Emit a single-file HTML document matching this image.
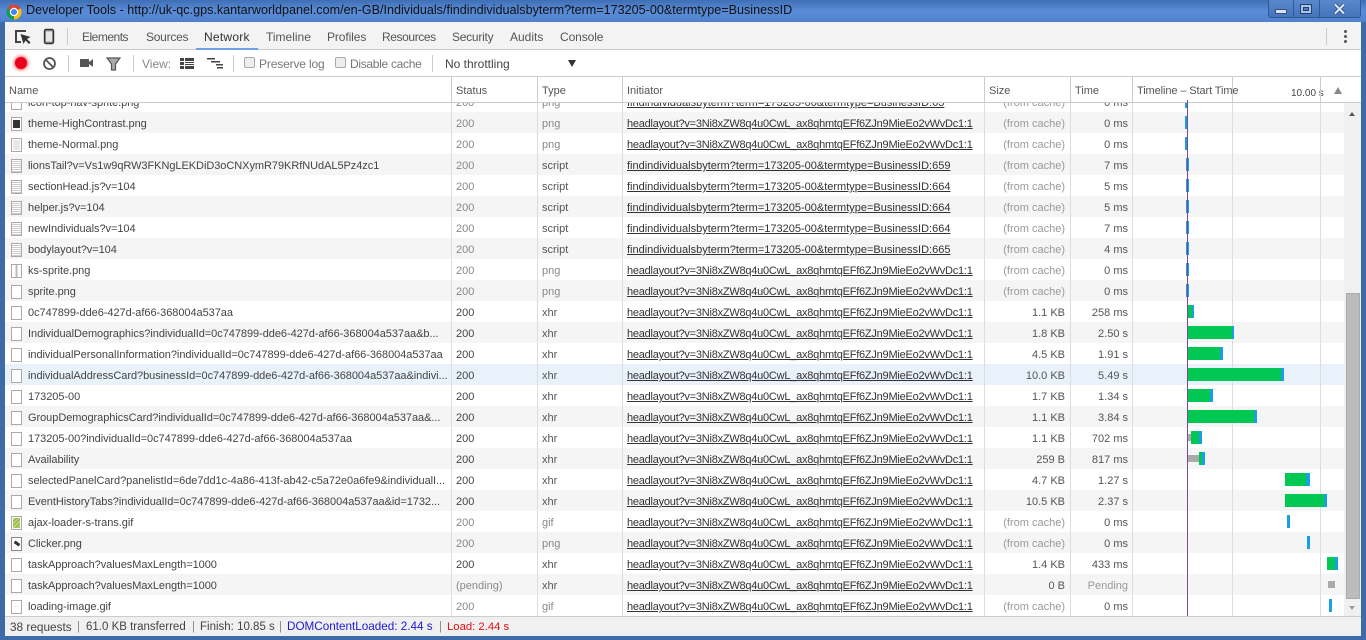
<!DOCTYPE html>
<html><head><meta charset="utf-8"><style>
*{box-sizing:border-box}
html,body{margin:0;padding:0;width:1366px;height:640px;overflow:hidden;background:#3d6aa8;font-family:"Liberation Sans",sans-serif;font-size:11px;color:#444}
body{position:relative}
div{position:absolute}
#title{left:0;top:0;width:1366px;height:22px;background:linear-gradient(#3f6fb5,#5a8cd8 50%,#4f80cc);}
#ttext{left:26px;top:3px;font-size:12.6px;color:#111;white-space:nowrap}
#main{left:5px;top:22px;width:1356px;height:614px;background:#fff}
.t{position:absolute;white-space:nowrap;color:#555;font-size:12px}
.h{position:absolute;white-space:nowrap;color:#555;font-size:11px}
.u{position:absolute;white-space:nowrap;top:619px;line-height:16px;color:#444}
.bar{position:absolute}
.sep{position:absolute;width:1px;background:#ccc}
.row{left:5px;width:1339px;height:21px;background:#fff}
.row.e{background:#f5f5f5}
.row.a{background:#e9f1fb}
.c{position:absolute;top:5px;white-space:nowrap;font-size:11px;color:#555;line-height:15px}
.n{left:23px;color:#444;letter-spacing:-.05px}
.s{left:451px;color:#888}.s.d{color:#444}
.y{left:537px;color:#888}.y.d{color:#555}
.i{left:622px;text-decoration:underline;color:#333;letter-spacing:-.23px}
.i.f{letter-spacing:0}
.z{right:279px;color:#999;text-align:right}.z.d{color:#555}
.m{right:216px;color:#555;text-align:right}.m.p{color:#999}
.ic{position:absolute;left:6px;top:5px;width:11px;height:14px;border:1px solid #aaa;background:#fff}
.sc{background:repeating-linear-gradient(#fff 0 1px,#ccc 1px 2px)}
.gl{position:absolute;top:103px;width:1px;height:513px;background:#ddd}
.b{position:absolute;background:#18a0e6;height:13px}
.v{position:absolute;background:#00c853;height:13px}
.q{position:absolute;background:#aaa;height:7px}
</style></head><body>
<div id="title"></div>
<svg style="position:absolute;left:6px;top:4px" width="16" height="16" viewBox="0 0 16 16"><circle cx="8" cy="8" r="7.5" fill="#db4437"/><path d="M8 8 L14.5 4.2 A7.5 7.5 0 0 1 8 15.5Z" fill="#f4c20d"/><path d="M8 8 L8 15.5 A7.5 7.5 0 0 1 1.5 4.2Z" fill="#0f9d58"/><circle cx="8" cy="8" r="3.6" fill="#4285f4" stroke="#fff" stroke-width="1.2"/></svg>
<div id="ttext">Developer Tools - http://uk-qc.gps.kantarworldpanel.com/en-GB/Individuals/findindividualsbyterm?term=173205-00&amp;termtype=BusinessID</div>
<div style="left:1268px;top:0;width:93px;height:18px;background:linear-gradient(#5a88cc,#4674bb);border:1px solid #2f5a99;border-top:0;border-radius:0 0 3px 3px"></div>
<div style="left:1293px;top:0;width:1px;height:17px;background:#2f5a99"></div>
<div style="left:1319px;top:0;width:1px;height:17px;background:#2f5a99"></div>
<div style="left:1275px;top:9px;width:12px;height:5px;background:#d8e4f4;border:1px solid #33507c;border-radius:1px"></div>
<div style="left:1300px;top:4px;width:12px;height:10px;border:1px solid #22406c;background:#a9c3e6"></div>
<div style="left:1303px;top:7px;width:6px;height:4px;background:#4e7cc0;border:1px solid #22406c"></div>
<svg style="position:absolute;left:1333px;top:3px" width="13" height="12" viewBox="0 0 13 12"><path d="M2 1.5l9 9M11 1.5l-9 9" stroke="#2b4a78" stroke-width="3.6"/><path d="M2 1.5l9 9M11 1.5l-9 9" stroke="#dfe9f7" stroke-width="2"/></svg>

<div id="main"></div>
<!-- top tab bar -->
<div style="left:5px;top:22px;width:1356px;height:28px;background:#f3f3f3;border-bottom:1px solid #ccc"></div>
<svg style="position:absolute;left:14px;top:28px" width="18" height="18" viewBox="0 0 18 18"><path d="M12 3H2v11h5" fill="none" stroke="#444" stroke-width="2"/><path d="M6.5 6l3 10 2-3.5 3.5 3.5 1.5-1.5-3.5-3.5 3.5-2z" fill="#333"/></svg>
<svg style="position:absolute;left:42px;top:28px" width="14" height="18" viewBox="0 0 14 18"><rect x="2.5" y="1.5" width="9" height="14" rx="1.5" fill="#999" stroke="#333" stroke-width="1.4"/><rect x="4" y="3.5" width="6" height="10" fill="#e6e6e6"/></svg>
<div class="sep" style="left:67px;top:28px;height:17px"></div>
<div class="t" style="left:82px;top:30px;letter-spacing:-.5px">Elements</div>
<div class="t" style="left:146px;top:30px;letter-spacing:-.25px">Sources</div>
<div class="t" style="left:204px;top:30px;color:#333;letter-spacing:.25px">Network</div>
<div style="left:196px;top:48px;width:62px;height:2px;background:#6f9fe8"></div>
<div class="t" style="left:266px;top:30px">Timeline</div>
<div class="t" style="left:327px;top:30px;letter-spacing:-.1px">Profiles</div>
<div class="t" style="left:382px;top:30px;letter-spacing:-.4px">Resources</div>
<div class="t" style="left:452px;top:30px;letter-spacing:-.25px">Security</div>
<div class="t" style="left:510px;top:30px">Audits</div>
<div class="t" style="left:560px;top:30px;letter-spacing:-.1px">Console</div>
<div class="sep" style="left:1326px;top:28px;height:17px"></div>
<div style="left:1344px;top:30px;width:3px;height:3px;background:#555;border-radius:2px;box-shadow:0 5px 0 #555,0 10px 0 #555"></div>
<!-- toolbar -->
<div style="left:5px;top:50px;width:1356px;height:27px;background:#fff;border-bottom:1px solid #ccc"></div>
<div style="left:15px;top:57px;width:12px;height:12px;border-radius:50%;background:#e8001c;box-shadow:0 0 3px 1px #f55"></div>
<svg style="position:absolute;left:42px;top:56px" width="15" height="15" viewBox="0 0 15 15"><circle cx="7.5" cy="7.5" r="5.5" fill="none" stroke="#555" stroke-width="1.8"/><path d="M3.5 3.5l8 8" stroke="#555" stroke-width="1.8"/></svg>
<div class="sep" style="left:68px;top:55px;height:17px"></div>
<svg style="position:absolute;left:79px;top:57px" width="15" height="12" viewBox="0 0 15 12"><rect x="1" y="2" width="9" height="8" fill="#555"/><path d="M10 5l4-3v8l-4-3z" fill="#555"/></svg>
<svg style="position:absolute;left:106px;top:57px" width="15" height="14" viewBox="0 0 15 14"><path d="M1 1h13L9.5 7v6h-4V7z" fill="#aaa" stroke="#555" stroke-width="1.2"/></svg>
<div class="sep" style="left:133px;top:55px;height:17px"></div>
<div class="t" style="left:142px;top:57px;color:#888">View:</div>
<svg style="position:absolute;left:180px;top:58px" width="15" height="11" viewBox="0 0 15 11"><path d="M0 0h4v3H0zM5 0h9v3H5zM0 4h4v3H0zM5 4h9v1H5zM5 6h9v1H5zM0 8h4v3H0zM5 8h9v3H5z" fill="#444"/></svg>
<svg style="position:absolute;left:207px;top:58px" width="17" height="11" viewBox="0 0 17 11"><path d="M0 0h8v1.5H0zM4 3h9v1.5H4zM9 6h7v1.5H9zM10 9h6v1.5h-6z" fill="#444"/></svg>
<div class="sep" style="left:233px;top:55px;height:17px"></div>
<div style="left:244px;top:57px;width:11px;height:11px;border:1px solid #aaa;border-radius:2px;background:#eee"></div>
<div class="t" style="left:259px;top:57px;color:#777;letter-spacing:-.15px">Preserve log</div>
<div style="left:335px;top:57px;width:11px;height:11px;border:1px solid #aaa;border-radius:2px;background:#eee"></div>
<div class="t" style="left:350px;top:57px;color:#777;letter-spacing:-.3px">Disable cache</div>
<div class="sep" style="left:432px;top:55px;height:17px"></div>
<div class="t" style="left:445px;top:57px;color:#444">No throttling</div>
<div style="left:568px;top:60px;width:0;height:0;border-left:4.5px solid transparent;border-right:4.5px solid transparent;border-top:7px solid #333"></div>

<!-- rows -->
<div class="row" style="top:91px"><div class="ic"></div><div class="c n">icon-top-nav-sprite.png</div><div class="c s">200</div><div class="c y">png</div><div class="c i f">findindividualsbyterm?term=173205-00&amp;termtype=BusinessID:63</div><div class="c z">(from cache)</div><div class="c m">0 ms</div></div>
<div class="row e" style="top:112px"><div class="ic" style="background:linear-gradient(#fff 2px,#333 2px 10px,#fff 10px);box-shadow:inset 0 0 0 1px #fff"></div><div class="c n">theme-HighContrast.png</div><div class="c s">200</div><div class="c y">png</div><div class="c i">headlayout?v=3Ni8xZW8q4u0CwL_ax8qhmtqEFf6ZJn9MieEo2vWvDc1:1</div><div class="c z">(from cache)</div><div class="c m">0 ms</div></div>
<div class="row" style="top:133px"><div class="ic" style="background:#e8e8e8;box-shadow:inset 0 0 0 1px #fff"></div><div class="c n">theme-Normal.png</div><div class="c s">200</div><div class="c y">png</div><div class="c i">headlayout?v=3Ni8xZW8q4u0CwL_ax8qhmtqEFf6ZJn9MieEo2vWvDc1:1</div><div class="c z">(from cache)</div><div class="c m">0 ms</div></div>
<div class="row e" style="top:154px"><div class="ic sc"></div><div class="c n">lionsTail?v=Vs1w9qRW3FKNgLEKDiD3oCNXymR79KRfNUdAL5Pz4zc1</div><div class="c s">200</div><div class="c y d">script</div><div class="c i f">findindividualsbyterm?term=173205-00&amp;termtype=BusinessID:659</div><div class="c z">(from cache)</div><div class="c m">7 ms</div></div>
<div class="row" style="top:175px"><div class="ic sc"></div><div class="c n">sectionHead.js?v=104</div><div class="c s">200</div><div class="c y d">script</div><div class="c i f">findindividualsbyterm?term=173205-00&amp;termtype=BusinessID:664</div><div class="c z">(from cache)</div><div class="c m">5 ms</div></div>
<div class="row e" style="top:196px"><div class="ic sc"></div><div class="c n">helper.js?v=104</div><div class="c s">200</div><div class="c y d">script</div><div class="c i f">findindividualsbyterm?term=173205-00&amp;termtype=BusinessID:664</div><div class="c z">(from cache)</div><div class="c m">5 ms</div></div>
<div class="row" style="top:217px"><div class="ic sc"></div><div class="c n">newIndividuals?v=104</div><div class="c s">200</div><div class="c y d">script</div><div class="c i f">findindividualsbyterm?term=173205-00&amp;termtype=BusinessID:664</div><div class="c z">(from cache)</div><div class="c m">7 ms</div></div>
<div class="row e" style="top:238px"><div class="ic sc"></div><div class="c n">bodylayout?v=104</div><div class="c s">200</div><div class="c y d">script</div><div class="c i f">findindividualsbyterm?term=173205-00&amp;termtype=BusinessID:665</div><div class="c z">(from cache)</div><div class="c m">4 ms</div></div>
<div class="row" style="top:259px"><div class="ic" style="background:linear-gradient(90deg,#fff 40%,#bbb 40% 60%,#fff 60%)"></div><div class="c n">ks-sprite.png</div><div class="c s">200</div><div class="c y">png</div><div class="c i">headlayout?v=3Ni8xZW8q4u0CwL_ax8qhmtqEFf6ZJn9MieEo2vWvDc1:1</div><div class="c z">(from cache)</div><div class="c m">0 ms</div></div>
<div class="row e" style="top:280px"><div class="ic"></div><div class="c n">sprite.png</div><div class="c s">200</div><div class="c y">png</div><div class="c i">headlayout?v=3Ni8xZW8q4u0CwL_ax8qhmtqEFf6ZJn9MieEo2vWvDc1:1</div><div class="c z">(from cache)</div><div class="c m">0 ms</div></div>
<div class="row" style="top:301px"><div class="ic"></div><div class="c n">0c747899-dde6-427d-af66-368004a537aa</div><div class="c s d">200</div><div class="c y d">xhr</div><div class="c i">headlayout?v=3Ni8xZW8q4u0CwL_ax8qhmtqEFf6ZJn9MieEo2vWvDc1:1</div><div class="c z d">1.1 KB</div><div class="c m">258 ms</div></div>
<div class="row e" style="top:322px"><div class="ic"></div><div class="c n">IndividualDemographics?individualId=0c747899-dde6-427d-af66-368004a537aa&amp;b...</div><div class="c s d">200</div><div class="c y d">xhr</div><div class="c i">headlayout?v=3Ni8xZW8q4u0CwL_ax8qhmtqEFf6ZJn9MieEo2vWvDc1:1</div><div class="c z d">1.8 KB</div><div class="c m">2.50 s</div></div>
<div class="row" style="top:343px"><div class="ic"></div><div class="c n">individualPersonalInformation?individualId=0c747899-dde6-427d-af66-368004a537aa</div><div class="c s d">200</div><div class="c y d">xhr</div><div class="c i">headlayout?v=3Ni8xZW8q4u0CwL_ax8qhmtqEFf6ZJn9MieEo2vWvDc1:1</div><div class="c z d">4.5 KB</div><div class="c m">1.91 s</div></div>
<div class="row a" style="top:364px"><div class="ic"></div><div class="c n">individualAddressCard?businessId=0c747899-dde6-427d-af66-368004a537aa&amp;indivi...</div><div class="c s d">200</div><div class="c y d">xhr</div><div class="c i">headlayout?v=3Ni8xZW8q4u0CwL_ax8qhmtqEFf6ZJn9MieEo2vWvDc1:1</div><div class="c z d">10.0 KB</div><div class="c m">5.49 s</div></div>
<div class="row" style="top:385px"><div class="ic"></div><div class="c n">173205-00</div><div class="c s d">200</div><div class="c y d">xhr</div><div class="c i">headlayout?v=3Ni8xZW8q4u0CwL_ax8qhmtqEFf6ZJn9MieEo2vWvDc1:1</div><div class="c z d">1.7 KB</div><div class="c m">1.34 s</div></div>
<div class="row e" style="top:406px"><div class="ic"></div><div class="c n">GroupDemographicsCard?individualId=0c747899-dde6-427d-af66-368004a537aa&amp;...</div><div class="c s d">200</div><div class="c y d">xhr</div><div class="c i">headlayout?v=3Ni8xZW8q4u0CwL_ax8qhmtqEFf6ZJn9MieEo2vWvDc1:1</div><div class="c z d">1.1 KB</div><div class="c m">3.84 s</div></div>
<div class="row" style="top:427px"><div class="ic"></div><div class="c n">173205-00?individualId=0c747899-dde6-427d-af66-368004a537aa</div><div class="c s d">200</div><div class="c y d">xhr</div><div class="c i">headlayout?v=3Ni8xZW8q4u0CwL_ax8qhmtqEFf6ZJn9MieEo2vWvDc1:1</div><div class="c z d">1.1 KB</div><div class="c m">702 ms</div></div>
<div class="row e" style="top:448px"><div class="ic"></div><div class="c n">Availability</div><div class="c s d">200</div><div class="c y d">xhr</div><div class="c i">headlayout?v=3Ni8xZW8q4u0CwL_ax8qhmtqEFf6ZJn9MieEo2vWvDc1:1</div><div class="c z d">259 B</div><div class="c m">817 ms</div></div>
<div class="row" style="top:469px"><div class="ic"></div><div class="c n">selectedPanelCard?panelistId=6de7dd1c-4a86-413f-ab42-c5a72e0a6fe9&amp;individualI...</div><div class="c s d">200</div><div class="c y d">xhr</div><div class="c i">headlayout?v=3Ni8xZW8q4u0CwL_ax8qhmtqEFf6ZJn9MieEo2vWvDc1:1</div><div class="c z d">4.7 KB</div><div class="c m">1.27 s</div></div>
<div class="row e" style="top:490px"><div class="ic"></div><div class="c n">EventHistoryTabs?individualId=0c747899-dde6-427d-af66-368004a537aa&amp;id=1732...</div><div class="c s d">200</div><div class="c y d">xhr</div><div class="c i">headlayout?v=3Ni8xZW8q4u0CwL_ax8qhmtqEFf6ZJn9MieEo2vWvDc1:1</div><div class="c z d">10.5 KB</div><div class="c m">2.37 s</div></div>
<div class="row" style="top:511px"><div class="ic" style="background:repeating-linear-gradient(135deg,#9dbb4a 0 2px,#d4e2a0 2px 3px);box-shadow:inset 0 0 0 1px #fff"></div><div class="c n">ajax-loader-s-trans.gif</div><div class="c s">200</div><div class="c y">gif</div><div class="c i">headlayout?v=3Ni8xZW8q4u0CwL_ax8qhmtqEFf6ZJn9MieEo2vWvDc1:1</div><div class="c z">(from cache)</div><div class="c m">0 ms</div></div>
<div class="row e" style="top:532px"><div class="ic" style="border-color:#888"><div style="left:2px;top:4px;width:6px;height:3px;background:#333;transform:rotate(35deg)"></div></div><div class="c n">Clicker.png</div><div class="c s">200</div><div class="c y">png</div><div class="c i">headlayout?v=3Ni8xZW8q4u0CwL_ax8qhmtqEFf6ZJn9MieEo2vWvDc1:1</div><div class="c z">(from cache)</div><div class="c m">0 ms</div></div>
<div class="row" style="top:553px"><div class="ic"></div><div class="c n">taskApproach?valuesMaxLength=1000</div><div class="c s d">200</div><div class="c y d">xhr</div><div class="c i">headlayout?v=3Ni8xZW8q4u0CwL_ax8qhmtqEFf6ZJn9MieEo2vWvDc1:1</div><div class="c z d">1.4 KB</div><div class="c m">433 ms</div></div>
<div class="row e" style="top:574px"><div class="ic"></div><div class="c n">taskApproach?valuesMaxLength=1000</div><div class="c s">(pending)</div><div class="c y d">xhr</div><div class="c i">headlayout?v=3Ni8xZW8q4u0CwL_ax8qhmtqEFf6ZJn9MieEo2vWvDc1:1</div><div class="c z d">0 B</div><div class="c m p">Pending</div></div>
<div class="row" style="top:595px"><div class="ic" style="color:#bcd27a;font-size:8px;line-height:12px;text-align:center">··</div><div class="c n">loading-image.gif</div><div class="c s">200</div><div class="c y">gif</div><div class="c i">headlayout?v=3Ni8xZW8q4u0CwL_ax8qhmtqEFf6ZJn9MieEo2vWvDc1:1</div><div class="c z">(from cache)</div><div class="c m">0 ms</div></div>

<!-- grid lines -->
<div class="gl" style="left:451px"></div><div class="gl" style="left:537px"></div><div class="gl" style="left:622px"></div><div class="gl" style="left:984px"></div><div class="gl" style="left:1070px"></div><div class="gl" style="left:1132px"></div><div class="gl" style="left:1232px"></div><div class="gl" style="left:1320px"></div>

<!-- header -->
<div style="left:5px;top:77px;width:1356px;height:26px;background:#fff;border-bottom:1px solid #ccc"></div>
<div class="h" style="left:9px;top:85px">Name</div>
<div class="h" style="left:456px;top:85px">Status</div>
<div class="h" style="left:542px;top:85px">Type</div>
<div class="h" style="left:627px;top:85px">Initiator</div>
<div class="h" style="left:989px;top:85px">Size</div>
<div class="h" style="left:1075px;top:85px">Time</div>
<div class="h" style="left:1137px;top:85px;letter-spacing:-.1px">Timeline – Start Time</div>
<div class="h" style="left:1291px;top:88px;font-size:10px;color:#444">10.00 s</div>
<div class="sep" style="left:451px;top:77px;height:26px"></div><div class="sep" style="left:537px;top:77px;height:26px"></div><div class="sep" style="left:622px;top:77px;height:26px"></div><div class="sep" style="left:984px;top:77px;height:26px"></div><div class="sep" style="left:1070px;top:77px;height:26px"></div><div class="sep" style="left:1132px;top:77px;height:26px"></div><div class="sep" style="left:1232px;top:77px;height:26px"></div><div class="sep" style="left:1320px;top:77px;height:26px"></div>
<div style="left:1334px;top:87px;width:0;height:0;border-left:4.5px solid transparent;border-right:4.5px solid transparent;border-bottom:7px solid #888"></div>

<!-- scrollbar -->
<div style="left:1344px;top:103px;width:17px;height:513px;background:#f0f0f0"></div>
<div style="left:1346px;top:293px;width:14px;height:306px;background:#bcbcbc;border:1px solid #aaa"></div>
<div style="left:1349px;top:112px;width:0;height:0;border-left:3.5px solid transparent;border-right:3.5px solid transparent;border-bottom:4px solid #555"></div>
<div style="left:1349px;top:606px;width:0;height:0;border-left:3.5px solid transparent;border-right:3.5px solid transparent;border-top:4px solid #999"></div>

<!-- timeline bars -->
<div class="b" style="left:1185px;top:103px;width:3px;height:5px"></div>
<div class="b" style="left:1185px;top:116px;width:3px"></div>
<div class="b" style="left:1185px;top:137px;width:3px"></div>
<div class="b" style="left:1186px;top:158px;width:3px"></div>
<div class="b" style="left:1186px;top:179px;width:3px"></div>
<div class="b" style="left:1186px;top:200px;width:3px"></div>
<div class="b" style="left:1186px;top:221px;width:3px"></div>
<div class="b" style="left:1186px;top:242px;width:3px"></div>
<div class="b" style="left:1186px;top:263px;width:3px"></div>
<div class="b" style="left:1186px;top:284px;width:3px"></div>
<div class="b" style="left:1188px;top:305px;width:6px"></div><div class="v" style="left:1188px;top:305px;width:4px"></div>
<div class="b" style="left:1188px;top:326px;width:46px"></div><div class="v" style="left:1188px;top:326px;width:44px"></div>
<div class="b" style="left:1188px;top:347px;width:35px"></div><div class="v" style="left:1188px;top:347px;width:32px"></div>
<div class="b" style="left:1188px;top:368px;width:96px"></div><div class="v" style="left:1188px;top:368px;width:93px"></div>
<div class="b" style="left:1188px;top:389px;width:25px"></div><div class="v" style="left:1188px;top:389px;width:22px"></div>
<div class="b" style="left:1188px;top:410px;width:69px"></div><div class="v" style="left:1188px;top:410px;width:66px"></div>
<div class="q" style="left:1188px;top:434px;width:3px"></div><div class="b" style="left:1191px;top:431px;width:11px"></div><div class="v" style="left:1191px;top:431px;width:8px"></div>
<div class="q" style="left:1188px;top:455px;width:11px"></div><div class="b" style="left:1199px;top:452px;width:6px"></div><div class="v" style="left:1199px;top:452px;width:3px"></div>
<div class="b" style="left:1285px;top:473px;width:25px"></div><div class="v" style="left:1285px;top:473px;width:21px"></div>
<div class="b" style="left:1285px;top:494px;width:42px"></div><div class="v" style="left:1285px;top:494px;width:39px"></div>
<div class="b" style="left:1287px;top:515px;width:3px"></div>
<div class="b" style="left:1307px;top:536px;width:3px"></div>
<div class="b" style="left:1327px;top:557px;width:11px"></div><div class="v" style="left:1327px;top:557px;width:8px"></div>
<div class="q" style="left:1328px;top:581px;width:7px"></div>
<div class="b" style="left:1329px;top:599px;width:3px"></div>
<div style="left:1187px;top:100px;width:1px;height:516px;background:#7b4a93"></div>

<!-- status -->
<div style="left:5px;top:616px;width:1356px;height:20px;background:#f0f0f0;border-top:1px solid #ccc"></div>
<div class="u" style="left:10px;font-size:11.8px">38 requests</div>
<div class="u" style="left:77px;font-size:11.5px;color:#888">|</div>
<div class="u" style="left:86px;font-size:11.5px">61.0 KB transferred</div>
<div class="u" style="left:192px;font-size:11.5px;color:#888">|</div>
<div class="u" style="left:200px;font-size:11.5px">Finish: 10.85 s</div>
<div class="u" style="left:279px;font-size:11.5px;color:#888">|</div>
<div class="u" style="left:287px;color:#1a1ad6;font-size:11.7px">DOMContentLoaded: 2.44 s</div>
<div class="u" style="left:439px;font-size:11.5px;color:#888">|</div>
<div class="u" style="left:447px;color:#e01010;font-size:11.3px">Load: 2.44 s</div>
</body></html>
